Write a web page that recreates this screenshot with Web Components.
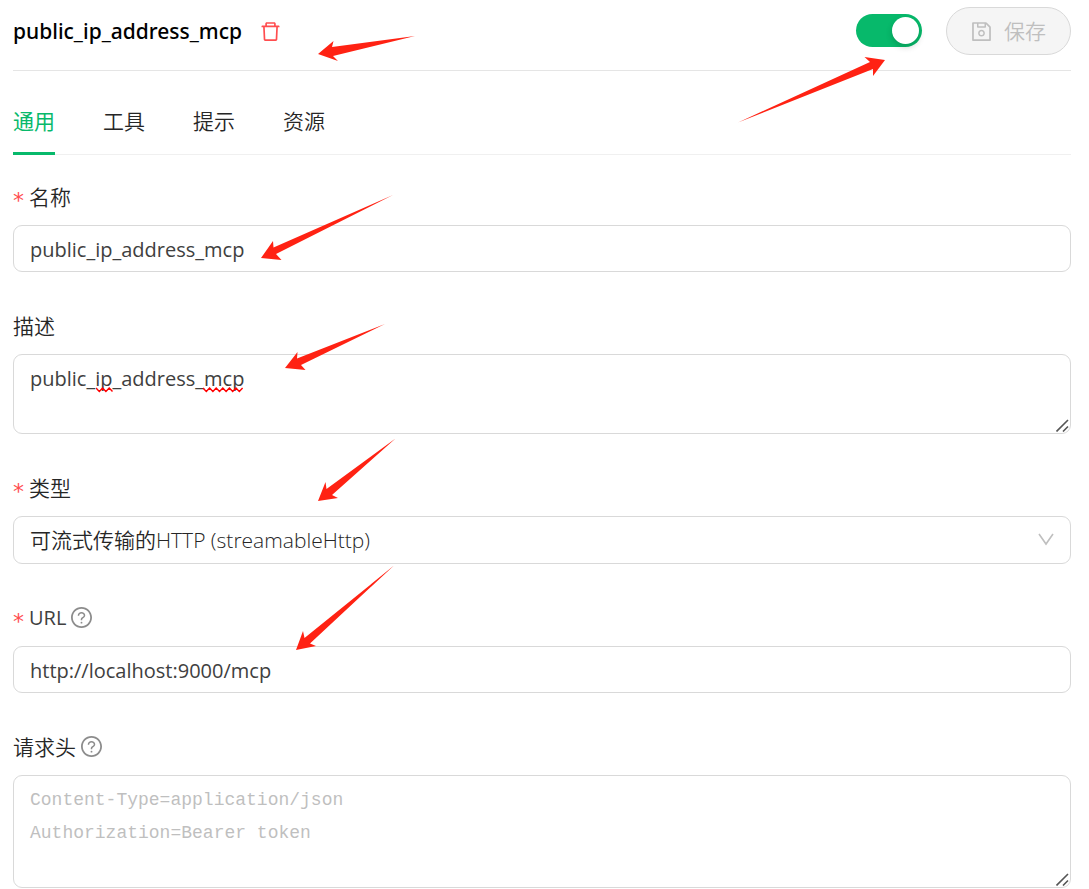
<!DOCTYPE html>
<html lang="zh-CN">
<head>
<meta charset="utf-8">
<title>public_ip_address_mcp</title>
<style>
  body {
    margin: 0;
    background: #fff;
    color: #262626;
    font: 350 21px/34px "Open Sans", "Noto Sans CJK SC", sans-serif;
    --green: #07b96b;
    --red: #ff4d4f;
    --line: #d9d9d9;
  }
</style>
</head>
<body>
<mcp-editor></mcp-editor>

<script>
const define = (name, html, setup) => customElements.define(name, class extends HTMLElement {
  connectedCallback() {
    if (this.shadowRoot) return;
    const root = this.attachShadow({ mode: 'open', delegatesFocus: true });
    root.innerHTML = '<style>*{box-sizing:border-box}</style>' + html;
    if (setup) setup.call(this, root);
  }
});

const fieldCss = `
  :host { display: block; }
  input, select, textarea {
    display: block; width: 100%; margin: 0; padding: 0 16px;
    border: 1px solid var(--line); border-radius: 9px; background: #fff;
    color: inherit; font: inherit; outline: none;
  }
  input, textarea { font-size: 20px; font-weight: 400; color: #404040; }
  input { height: 47px; padding-top: 1px; }
  select { height: 48px; appearance: none; }
  textarea { padding-top: 7px; line-height: 33px; resize: none; overflow: hidden; }
  textarea::placeholder { color: #bfbfbf; opacity: 1; }
`;

define('switch-toggle', `
  <style>
    :host { display: block; }
    input {
      appearance: none; display: flex; align-items: center; justify-content: flex-start;
      width: 66px; height: 33px; margin: 0; padding: 3px; border-radius: 17px; background: #bfbfbf;
    }
    input:checked { justify-content: flex-end; background: var(--green); }
    input::before {
      content: ""; width: 27px; height: 27px; border-radius: 50%;
      background: #fff; box-shadow: 0 3px 6px rgba(0, 35, 11, .2);
    }
  </style>
  <input type="checkbox" role="switch" aria-label="启用" checked>`);

define('save-button', `
  <style>
    :host { display: block; }
    button {
      display: flex; align-items: center; gap: 12px; height: 48px; padding: 0 24px;
      border: 1px solid var(--line); border-radius: 24px; background: #f5f5f5;
      color: #bfbfbf; font: inherit;
    }
    svg { width: 21px; height: 21px; }
  </style>
  <button type="button" disabled>
    <svg viewBox="64 64 896 896" fill="currentColor" aria-hidden="true"><path d="M893.3 293.3L730.7 130.7c-7.5-7.5-16.700-13-26.700-16V112H144c-17.700 0-32 14.300-32 32v736c0 17.700 14.300 32 32 32h736c17.700 0 32-14.300 32-32V338.500c0-17-6.700-33.200-18.700-45.200zM384 184h256v104H384V184zm456 656H184V184h136v136c0 17.700 14.300 32 32 32h320c17.700 0 32-14.300 32-32V205.800l136 136V840zM512 442c-79.500 0-144 64.500-144 144s64.500 144 144 144 144-64.500 144-144-64.500-144-144-144zm0 224c-44.200 0-80-35.800-80-80s35.800-80 80-80 80 35.800 80 80-35.800 80-80 80z"/></svg>
    <slot></slot>
  </button>`);

define('editor-header', `
  <style>
    :host { display: block; border-bottom: 1px solid #e5e5e5; padding: 7px 0 15px; }
    header { display: flex; align-items: center; }
    h1 { margin: 0; color: #000; font: 500 21px/34px "Noto Sans", sans-serif; }
    .delete { display: flex; margin: 0 auto 0 18px; padding: 0; border: 0; background: none; color: var(--red); }
    .delete svg { width: 21px; height: 21px; }
    switch-toggle { margin: 0 24px 2px 0; }
  </style>
  <header>
    <h1><slot></slot></h1>
    <button class="delete" type="button" aria-label="删除">
      <svg viewBox="64 64 896 896" fill="currentColor"><path d="M360 184h-8c4.400 0 8-3.600 8-8v8h304v-8c0 4.400 3.600 8 8 8h-8v72h72v-80c0-35.300-28.700-64-64-64H352c-35.300 0-64 28.700-64 64v80h72v-72zm504 72H160c-17.700 0-32 14.300-32 32v32c0 4.400 3.600 8 8 8h60.400l24.700 523c1.600 34.100 29.800 61 63.900 61h454c34.200 0 62.300-26.800 63.900-61l24.700-523H888c4.400 0 8-3.600 8-8v-32c0-17.700-14.300-32-32-32zM731.300 840H292.700l-24.200-512h487l-24.200 512z"/></svg>
    </button>
    <switch-toggle></switch-toggle>
    <save-button>保存</save-button>
  </header>`);

define('tab-bar', `
  <style>
    :host { display: block; border-bottom: 1px solid #f0f0f0; }
    nav { display: flex; gap: 48px; margin-bottom: -1px; }
    a { padding: 33px 0 14px; border-bottom: 3px solid transparent; color: inherit; text-decoration: none; }
    a[aria-current] { color: var(--green); border-color: var(--green); font-weight: 400; }
  </style>
  <nav></nav>`, function (root) {
  root.querySelector('nav').innerHTML = this.getAttribute('items').split(' ')
    .map((t, i) => `<a href="#tab-${i}"${i ? '' : ' aria-current="page"'}>${t}</a>`).join('');
});

define('help-icon', `
  <style>:host { display: block; width: 21px; height: 21px; color: #8c8c8c; margin-bottom: 2px; } svg { display: block; }</style>
  <svg width="21" height="21" viewBox="64 64 896 896" fill="currentColor" aria-hidden="true"><path d="M512 64C264.600 64 64 264.600 64 512s200.600 448 448 448 448-200.600 448-448S759.400 64 512 64zm0 820c-205.400 0-372-166.600-372-372s166.600-372 372-372 372 166.600 372 372-166.600 372-372 372z"/><path d="M623.600 316.700C593.600 290.400 554 276 512 276s-81.600 14.500-111.600 40.700C369.200 344 352 380.700 352 420v7.600c0 4.400 3.600 8 8 8h48c4.400 0 8-3.600 8-8V420c0-44.100 43.100-80 96-80s96 35.900 96 80c0 31.100-22 59.600-56.100 72.700-21.200 8.100-39.200 22.300-52.100 40.900-13.100 19-19.900 41.800-19.900 64.900V620c0 4.400 3.600 8 8 8h48c4.400 0 8-3.600 8-8v-22.700a48.300 48.300 0 0 1 30.900-44.800c59-22.700 97.100-74.700 97.100-132.500 0-39.300-17.200-76-48.300-103.300zM472 732a40 40 0 1 0 80 0 40 40 0 1 0-80 0z"/></svg>`);

define('resize-grip', `
  <style>:host { position: absolute; right: 2px; bottom: 2px; width: 13px; height: 13px; pointer-events: none; } svg { display: block; }</style>
  <svg width="13" height="13" fill="none" stroke="#555" stroke-width="1.600" aria-hidden="true"><path d="M0.500 12.500L12 1M7 12.500L12 7.500"/></svg>`);

define('form-field', `
  <style>
    ${fieldCss}
    :host { margin-bottom: 37px; }
    .caption { display: flex; align-items: center; gap: 5px; height: 34px; margin-bottom: 11px; }
    .star { padding-top: 8px; color: var(--red); font: 400 22px/34px "DejaVu Sans", sans-serif; }
    .latin label { font-size: 20px; font-weight: 400; color: #404040; }
    .control { position: relative; }
    .chevron { position: absolute; right: 17px; top: 17px; pointer-events: none; }
    .mono { padding-top: 8px; font-family: "Liberation Mono", monospace; font-size: 18px; }
    .squiggle { position: absolute; left: 83px; top: 33px; pointer-events: none; }
  </style>
  <div class="caption"><label for="field"></label></div>
  <div class="control"></div>`, function (root) {
  const { label, kind, value = '', rows, hint = '' } = this.dataset;
  const caption = root.querySelector('.caption');
  caption.querySelector('label').textContent = label;
  if (/^[A-Z]+$/.test(label)) caption.classList.add('latin');
  if ('required' in this.dataset) caption.insertAdjacentHTML('afterbegin', '<span class="star" aria-hidden="true">*</span>');
  if ('help' in this.dataset) caption.insertAdjacentHTML('beforeend', '<help-icon></help-icon>');
  const control = root.querySelector('.control');
  if (kind === 'select') {
    control.innerHTML = `<select id="field"><option>${value}</option></select>
      <svg class="chevron" width="16" height="14" fill="none" stroke="#bfbfbf" stroke-width="1.600" aria-hidden="true"><path d="M1 1L8 11L15 1"/></svg>`;
  } else if (kind === 'area') {
    control.innerHTML = `<textarea id="field" spellcheck="false"></textarea><resize-grip></resize-grip>`;
    const area = control.querySelector('textarea');
    area.value = value;
    area.placeholder = hint.split('|').join('\n');
    area.style.height = rows === '3' ? '113px' : '80px';
    if (hint) area.classList.add('mono');
    if ('misspelled' in this.dataset) {
      const wave = (x, n) => { let d = `M${x} 1`; for (let i = 1; i <= n; i++) d += `L${x + i * 3.3} ${i % 2 ? 4.500 : 1}`; return d; };
      control.insertAdjacentHTML('beforeend',
        `<svg class="squiggle" width="150" height="6" fill="none" stroke="#f00" stroke-width="1.400" aria-hidden="true"><path d="${wave(0, 5)}${wave(107, 12)}"/></svg>`);
    }
  } else {
    control.innerHTML = '<input id="field" type="text" spellcheck="false">';
    control.querySelector('input').value = value;
  }
});

define('arrow-notes', `
  <style>:host { position: absolute; left: 0; top: 0; pointer-events: none; } svg { display: block; }</style>
  <svg width="900" height="660" fill="#ff2213" aria-hidden="true">
    <path d="M318 54L333.500 41L332 47L415 36L333 56L338 61Z"/>
    <path d="M885 60L864.500 57L870 62L738 122.500L873 69L873 76Z"/>
    <path d="M261 258L273 241L273.500 247.500L393 195L276 254L281.500 260Z"/>
    <path d="M285 368L297.500 352L297 358.500L385 324L301 365L305.500 370Z"/>
    <path d="M318 501L325.500 482L326.500 489L395.500 438.500L332 495L338 498Z"/>
    <path d="M296 650L303 631L304.500 638L394 565.500L310 643.500L316 646Z"/>
  </svg>`);

define('mcp-editor', `
  <style>
    :host { display: block; position: relative; padding: 0 18px 0 13px; }
    form { padding-top: 25px; }
    form-field:last-child { margin-bottom: 0; }
  </style>
  <editor-header>public_ip_address_mcp</editor-header>
  <tab-bar items="通用 工具 提示 资源"></tab-bar>
  <form>
    <form-field data-label="名称" data-required data-value="public_ip_address_mcp"></form-field>
    <form-field data-label="描述" data-kind="area" data-rows="2" data-misspelled data-value="public_ip_address_mcp"></form-field>
    <form-field data-label="类型" data-required data-kind="select" data-value="可流式传输的HTTP (streamableHttp)"></form-field>
    <form-field data-label="URL" data-required data-help data-value="http://localhost:9000/mcp"></form-field>
    <form-field data-label="请求头" data-help data-kind="area" data-rows="3" data-hint="Content-Type=application/json|Authorization=Bearer token"></form-field>
  </form>
  <arrow-notes></arrow-notes>`);
</script>
</body>
</html>
